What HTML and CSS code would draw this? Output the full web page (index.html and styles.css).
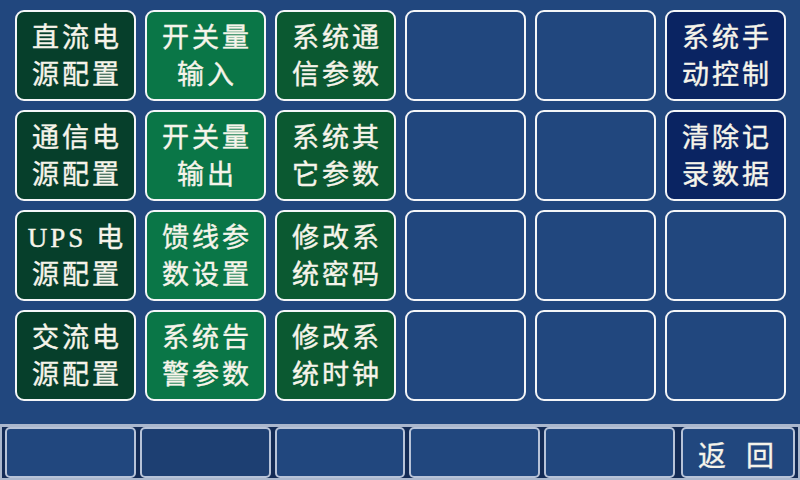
FILE: index.html
```html
<!DOCTYPE html>
<html lang="zh">
<head>
<meta charset="utf-8">
<title>系统设置</title>
<link rel="stylesheet" href="styles.css">
</head>
<body>
<div class="screen">
  <div class="grid">
    <div class="btn dk">直流电<br>源配置</div>
    <div class="btn gr">开关量<br>输入</div>
    <div class="btn md">系统通<br>信参数</div>
    <div class="btn empty"></div>
    <div class="btn empty"></div>
    <div class="btn nv">系统手<br>动控制</div>

    <div class="btn dk">通信电<br>源配置</div>
    <div class="btn gr">开关量<br>输出</div>
    <div class="btn md">系统其<br>它参数</div>
    <div class="btn empty"></div>
    <div class="btn empty"></div>
    <div class="btn nv">清除记<br>录数据</div>

    <div class="btn dk">UPS 电<br>源配置</div>
    <div class="btn gr">馈线参<br>数设置</div>
    <div class="btn md">修改系<br>统密码</div>
    <div class="btn empty"></div>
    <div class="btn empty"></div>
    <div class="btn empty"></div>

    <div class="btn dk">交流电<br>源配置</div>
    <div class="btn gr">系统告<br>警参数</div>
    <div class="btn md">修改系<br>统时钟</div>
    <div class="btn empty"></div>
    <div class="btn empty"></div>
    <div class="btn empty"></div>
  </div>
  <div class="bar">
    <div class="key"></div>
    <div class="key pressed"></div>
    <div class="key"></div>
    <div class="key"></div>
    <div class="key"></div>
    <div class="key last">返<span class="sp"></span>回</div>
  </div>
</div>
</body>
</html>
```
FILE: styles.css
```css
html, body {
  margin: 0;
  padding: 0;
}
body {
  width: 800px;
  height: 480px;
  overflow: hidden;
  background: #21477e;
  font-family: "Liberation Serif", "Noto Sans CJK SC", serif;
}
.screen {
  width: 800px;
  height: 480px;
  display: flex;
  flex-direction: column;
}
.grid {
  display: grid;
  grid-template-columns: repeat(6, 121px);
  grid-template-rows: repeat(4, 91px);
  column-gap: 9px;
  row-gap: 9px;
  padding: 10px 0 0 15px;
  box-sizing: border-box;
  height: 424px;
  flex: none;
  align-content: start;
}
.btn {
  box-sizing: border-box;
  border: 2.5px solid #f4f6f8;
  border-radius: 9px;
  display: flex;
  align-items: center;
  justify-content: center;
  text-align: center;
  color: #f6f4ea;
  font-size: 27px;
  line-height: 37px;
  letter-spacing: 3px;
  padding: 3px 0 0 3px;
  -webkit-text-stroke: 0.4px #f6f4ea;
}
.dk { background: #063f2b; }
.gr { background: #0a7647; }
.md { background: #0b5931; }
.nv { background: #0a2462; }
.empty { background: #21477e; }

.bar {
  height: 56px;
  flex: none;
  box-sizing: border-box;
  border: 2px solid #aab7cd;
  border-top-width: 3px;
  background: #132b55;
  display: flex;
  gap: 4px;
  padding: 0 3px 0 3px;
}
.key {
  box-sizing: border-box;
  width: 131px;
  height: 100%;
  border: 2px solid #b7c3d8;
  border-radius: 5px;
  background: #21477e;
}
.key.pressed {
  background: #1d3f72;
}
.key.last {
  width: 114px;
  margin-left: 2px;
  display: flex;
  align-items: center;
  justify-content: center;
  color: #f6f4ea;
  font-size: 28px;
  padding: 2px 4px 0 0;
  -webkit-text-stroke: 0.3px #f6f4ea;
}
.sp {
  display: inline-block;
  width: 20px;
}
```
